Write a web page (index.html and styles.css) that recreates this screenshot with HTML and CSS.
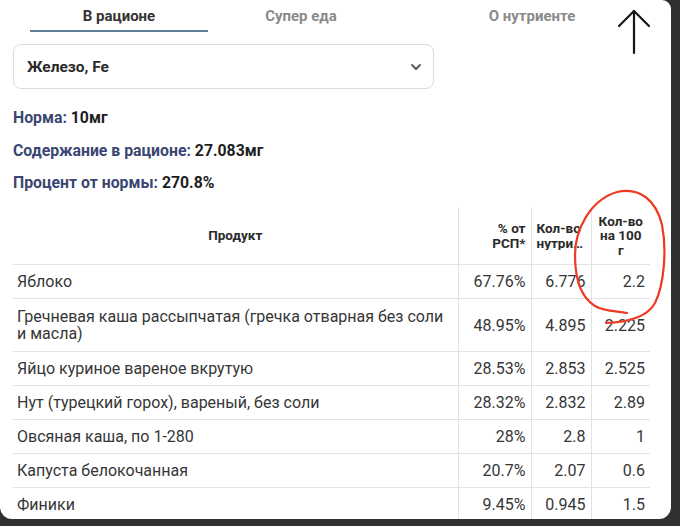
FILE: index.html
```html
<!DOCTYPE html>
<html lang="ru">
<head>
<meta charset="utf-8">
<title>В рационе</title>
<link rel="stylesheet" href="styles.css">
</head>
<body>
<div class="card">
  <nav class="tabs">
    <div class="tab active">В рационе</div>
    <div class="tab">Супер еда</div>
    <div class="tab">О нутриенте</div>
  </nav>
  <div class="select">
    <span>Железо, Fe</span>
    <svg class="chev" width="12" height="8" viewBox="0 0 12 8"><path d="M2 2l4 4 4-4" fill="none" stroke="#555" stroke-width="1.8" stroke-linecap="round" stroke-linejoin="round"/></svg>
  </div>
  <div class="info">
    <p><span class="k">Норма:</span> 10мг</p>
    <p><span class="k">Содержание в рационе:</span> 27.083мг</p>
    <p><span class="k">Процент от нормы:</span> 270.8%</p>
  </div>
  <table class="grid">
    <colgroup>
      <col class="c1"><col class="c2"><col class="c3"><col class="c4">
    </colgroup>
    <thead>
      <tr>
        <th class="h-prod">Продукт</th>
        <th class="h-num">% от<br>РСП*</th>
        <th class="h-cut"><span>Кол-во</span><span>нутриента</span></th>
        <th class="h-mid">Кол-во<br>на 100<br>г</th>
      </tr>
    </thead>
    <tbody>
      <tr><td>Яблоко</td><td class="n">67.76%</td><td class="n">6.776</td><td class="n">2.2</td></tr>
      <tr class="tall"><td>Гречневая каша рассыпчатая (гречка отварная без соли и масла)</td><td class="n">48.95%</td><td class="n">4.895</td><td class="n">2.225</td></tr>
      <tr><td>Яйцо куриное вареное вкрутую</td><td class="n">28.53%</td><td class="n">2.853</td><td class="n">2.525</td></tr>
      <tr><td>Нут (турецкий горох), вареный, без соли</td><td class="n">28.32%</td><td class="n">2.832</td><td class="n">2.89</td></tr>
      <tr><td>Овсяная каша, по 1-280</td><td class="n">28%</td><td class="n">2.8</td><td class="n">1</td></tr>
      <tr><td>Капуста белокочанная</td><td class="n">20.7%</td><td class="n">2.07</td><td class="n">0.6</td></tr>
      <tr><td>Финики</td><td class="n">9.45%</td><td class="n">0.945</td><td class="n">1.5</td></tr>
    </tbody>
  </table>
</div>
<svg class="annot" width="680" height="526" viewBox="0 0 680 526">
  <g fill="none" stroke="#161616" stroke-width="2.2" stroke-linecap="round" stroke-linejoin="round">
    <path d="M634 11 L634 53"/>
    <path d="M619 26 L634 11 L649 26"/>
  </g>
  <path d="M627 313 C615 311 603 311 595 306 C582 298 575 280 575 255 C575 230 590 200 617 192 C640 187 656 200 662 225 C667 250 664 285 655 303 C648 316 632 322 606 323" fill="none" stroke="#ee3a22" stroke-width="2.2" stroke-linecap="round" stroke-linejoin="round"/>
</svg>
</body>
</html>
```

FILE: styles.css
```css
html, body {
  margin: 0;
  padding: 0;
}
body {
  width: 680px;
  height: 526px;
  background: #2f3032;
  font-family: Roboto, "Noto Sans", sans-serif;
  position: relative;
  overflow: hidden;
}
.card {
  box-sizing: border-box;
  width: 671px;
  height: 519px;
  background: #fff;
  border-radius: 0 9px 12px 12px;
  padding-left: 13px;
  overflow: hidden;
}
.tabs {
  display: grid;
  grid-template-columns: 178px 186px 276px;
  margin-left: 17px;
}
.tab {
  text-align: center;
  font-size: 15px;
  font-weight: 700;
  line-height: 20px;
  padding: 6px 0 4px;
  color: #8a8a8a;
  border-bottom: 2px solid transparent;
}
.tab.active {
  color: #333;
  border-bottom-color: #5f7f99;
}
.select {
  box-sizing: border-box;
  margin-top: 12px;
  width: 421px;
  height: 45px;
  border: 1px solid #dcdcdc;
  border-radius: 8px;
  display: flex;
  align-items: center;
  justify-content: space-between;
  padding: 0 11px 0 13px;
  font-size: 15.5px;
  font-weight: 700;
  color: #2a2a2a;
}
.chev {
  display: block;
}
.info {
  margin-top: 19px;
  display: flex;
  flex-direction: column;
  gap: 12.5px;
}
.info p {
  margin: 0;
  font-size: 15.8px;
  line-height: 20px;
  font-weight: 700;
  color: #1e1e1e;
}
.info .k {
  color: #3a4672;
}
.grid {
  margin-top: 14px;
  border-collapse: collapse;
  table-layout: fixed;
  width: 637px;
  color: #363636;
}
.c1 { width: 445px; }
.c2 { width: 73px; }
.c3 { width: 60px; }
.c4 { width: 59px; }
.grid th {
  height: 57px;
  font-size: 13.5px;
  line-height: 14.5px;
  font-weight: 700;
  color: #2a2a2a;
  vertical-align: middle;
  border-bottom: 1px solid #e2e2e2;
  padding: 0 5px;
}
.grid th + th,
.grid td + td {
  border-left: 1px solid #e2e2e2;
}
.h-prod { text-align: center; }
.h-num { text-align: right; }
.h-mid { text-align: center; }
.h-cut { text-align: left; }
.h-cut span {
  display: block;
  overflow: hidden;
  white-space: nowrap;
  text-overflow: ellipsis;
}
.grid td {
  font-size: 16px;
  line-height: 17px;
  padding: 8px 4px;
  border-bottom: 1px solid #e2e2e2;
  vertical-align: middle;
}
.grid td.n {
  text-align: right;
  padding-right: 5px;
}
.grid tr.tall td {
  padding-top: 9px;
  padding-bottom: 9px;
}
.annot {
  position: absolute;
  left: 0;
  top: 0;
  pointer-events: none;
}
```
